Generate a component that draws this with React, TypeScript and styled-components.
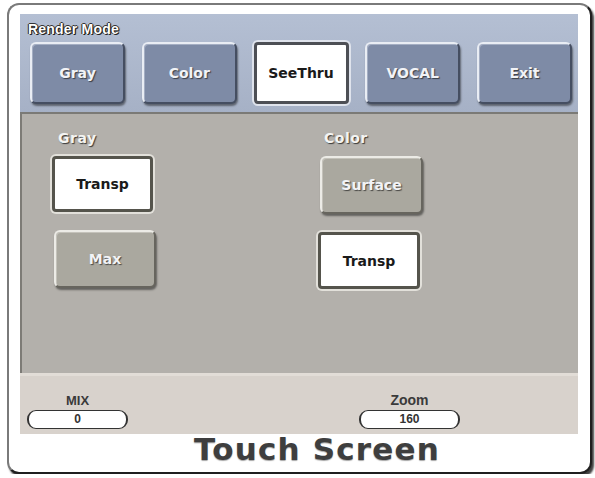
import React from 'react';
import styled, { createGlobalStyle, css } from 'styled-components';

const GlobalStyle = createGlobalStyle`
  html, body {
    margin: 0;
    padding: 0;
    background: #ffffff;
  }
  body {
    font-family: 'DejaVu Sans', 'Liberation Sans', sans-serif;
  }
`;

const Frame = styled.div`
  box-sizing: border-box;
  width: 585px;
  height: 471px;
  margin: 3px 0 0 7px;
  padding: 9px 12px 0 11px;
  display: flex;
  flex-direction: column;
  background: #ffffff;
  border: 2px solid #7a7a7a;
  border-right-color: #1f1f1f;
  border-bottom-color: #1f1f1f;
  border-radius: 12px;
  box-shadow: 2px 3px 2px rgba(0, 0, 0, 0.75);
`;

const ModePanel = styled.div`
  height: 100px;
  box-sizing: border-box;
  padding: 7px 6px 0 8px;
  background: linear-gradient(#b4bfd3, #a6b1c6);
  border-bottom: 2px solid #7b7a76;
`;

const PanelTitle = styled.div`
  font-family: 'Liberation Sans', Arial, sans-serif;
  font-weight: bold;
  font-size: 14px;
  line-height: 16px;
  letter-spacing: 0.2px;
  color: #ffffff;
  text-shadow: 1px 1px 0 #222, -1px 0 0 #222, 0 -1px 0 #333, 1px 0 1px #222;
`;

const ModeRow = styled.div`
  display: flex;
  justify-content: space-between;
  margin: 5px 0 0 2px;
`;

const raised = css<{ $tone: 'blue' | 'gray' }>`
  border: 2px solid;
  border-radius: 6px;
  border-color: ${(p) =>
    p.$tone === 'blue'
      ? '#e9edf4 #454e61 #454e61 #e9edf4'
      : '#ecebe6 #67655e #67655e #ecebe6'};
  background: ${(p) => (p.$tone === 'blue' ? '#7e8ba6' : '#aaa89f')};
  color: #f2f3f6;
  text-shadow: 1px 1px 1px rgba(30, 30, 30, 0.7);
  box-shadow: 1px 2px 2px rgba(0, 0, 0, 0.45),
    inset 1px 1px 0 ${(p) => (p.$tone === 'blue' ? '#a4aec3' : '#c4c2ba')};
`;

const pressed = css<{ $tone: 'blue' | 'gray' }>`
  border: 3px solid ${(p) => (p.$tone === 'blue' ? '#4d4f55' : '#55544c')};
  border-radius: 4px;
  background: #ffffff;
  color: #1a1a1a;
  box-shadow: 0 0 0 2px ${(p) => (p.$tone === 'blue' ? '#dfe3ec' : '#e2e0da')};
`;

const PadButton = styled.button<{ $tone: 'blue' | 'gray'; $active?: boolean; $w: number; $h: number }>`
  box-sizing: border-box;
  width: ${(p) => p.$w}px;
  height: ${(p) => p.$h}px;
  padding: 0;
  font-family: 'DejaVu Sans', Verdana, sans-serif;
  font-weight: bold;
  font-size: 14px;
  cursor: pointer;
  ${(p) => (p.$active ? pressed : raised)}
`;

const ViewPanel = styled.div`
  height: 259px;
  box-sizing: border-box;
  padding: 16px 0 0 30px;
  display: grid;
  grid-template-columns: 266px 1fr;
  background: #b3b0ab;
  border-left: 2px solid #7d7b76;
`;

const ViewColumn = styled.div`
  display: flex;
  flex-direction: column;
  align-items: flex-start;
`;

const GroupLabel = styled.div`
  margin: 0 0 10px 6px;
  font-family: 'DejaVu Sans', Verdana, sans-serif;
  font-weight: bold;
  font-size: 14px;
  line-height: 16px;
  letter-spacing: 0.5px;
  color: #f4f4f2;
  text-shadow: 1px 1px 1px #3a3a3a;
`;

const Stack = styled.div`
  display: flex;
  flex-direction: column;
  gap: 18px;
`;

const StatusStrip = styled.div`
  height: 61px;
  box-sizing: border-box;
  padding: 17px 0 0 7px;
  display: flex;
  gap: 231px;
  background: #d8d2cc;
  border-top: 3px solid #e2ddd7;
`;

const Readout = styled.div`
  width: 101px;
  display: flex;
  flex-direction: column;
  align-items: center;
`;

const ReadoutLabel = styled.div<{ $size: number }>`
  font-family: 'Liberation Sans', Arial, sans-serif;
  font-weight: bold;
  font-size: ${(p) => p.$size}px;
  line-height: 15px;
  color: #3a3a3a;
`;

const ReadoutValue = styled.div`
  box-sizing: border-box;
  width: 100%;
  height: 19px;
  margin-top: 2px;
  border: 1px solid #333;
  border-left-width: 2px;
  border-right-width: 2px;
  border-radius: 9px;
  background: #ffffff;
  text-align: center;
  font-family: 'Liberation Sans', Arial, sans-serif;
  font-weight: bold;
  font-size: 12px;
  line-height: 17px;
  color: #333;
`;

const Caption = styled.div`
  padding-left: 36px;
  text-align: center;
  font-family: 'DejaVu Sans', Verdana, sans-serif;
  font-weight: bold;
  font-size: 31px;
  line-height: 30px;
  letter-spacing: 1.2px;
  color: #3e3e3e;
  text-shadow: 0 1px 1px rgba(0, 0, 0, 0.35);
`;

const modes = ['Gray', 'Color', 'SeeThru', 'VOCAL', 'Exit'];

const App = () => {
  const mode = 'SeeThru';

  return (
    <>
      <GlobalStyle />
      <Frame>
        <ModePanel>
          <PanelTitle>Render Mode</PanelTitle>
          <ModeRow>
            {modes.map((m) => (
              <PadButton key={m} $tone='blue' $active={m === mode} $w={95} $h={62}>
                {m}
              </PadButton>
            ))}
          </ModeRow>
        </ModePanel>
        <ViewPanel>
          <ViewColumn>
            <GroupLabel>Gray</GroupLabel>
            <Stack>
              <PadButton $tone='gray' $active $w={101} $h={56}>
                Transp
              </PadButton>
              <PadButton $tone='gray' $w={102} $h={58} style={{ marginLeft: 2 }}>
                Max
              </PadButton>
            </Stack>
          </ViewColumn>
          <ViewColumn>
            <GroupLabel>Color</GroupLabel>
            <Stack>
              <PadButton $tone='gray' $w={103} $h={58} style={{ marginLeft: 2 }}>
                Surface
              </PadButton>
              <PadButton $tone='gray' $active $w={102} $h={57}>
                Transp
              </PadButton>
            </Stack>
          </ViewColumn>
        </ViewPanel>
        <StatusStrip>
          <Readout>
            <ReadoutLabel $size={13}>MIX</ReadoutLabel>
            <ReadoutValue>0</ReadoutValue>
          </Readout>
          <Readout>
            <ReadoutLabel $size={14}>Zoom</ReadoutLabel>
            <ReadoutValue>160</ReadoutValue>
          </Readout>
        </StatusStrip>
        <Caption>Touch Screen</Caption>
      </Frame>
    </>
  );
};

export default App;
